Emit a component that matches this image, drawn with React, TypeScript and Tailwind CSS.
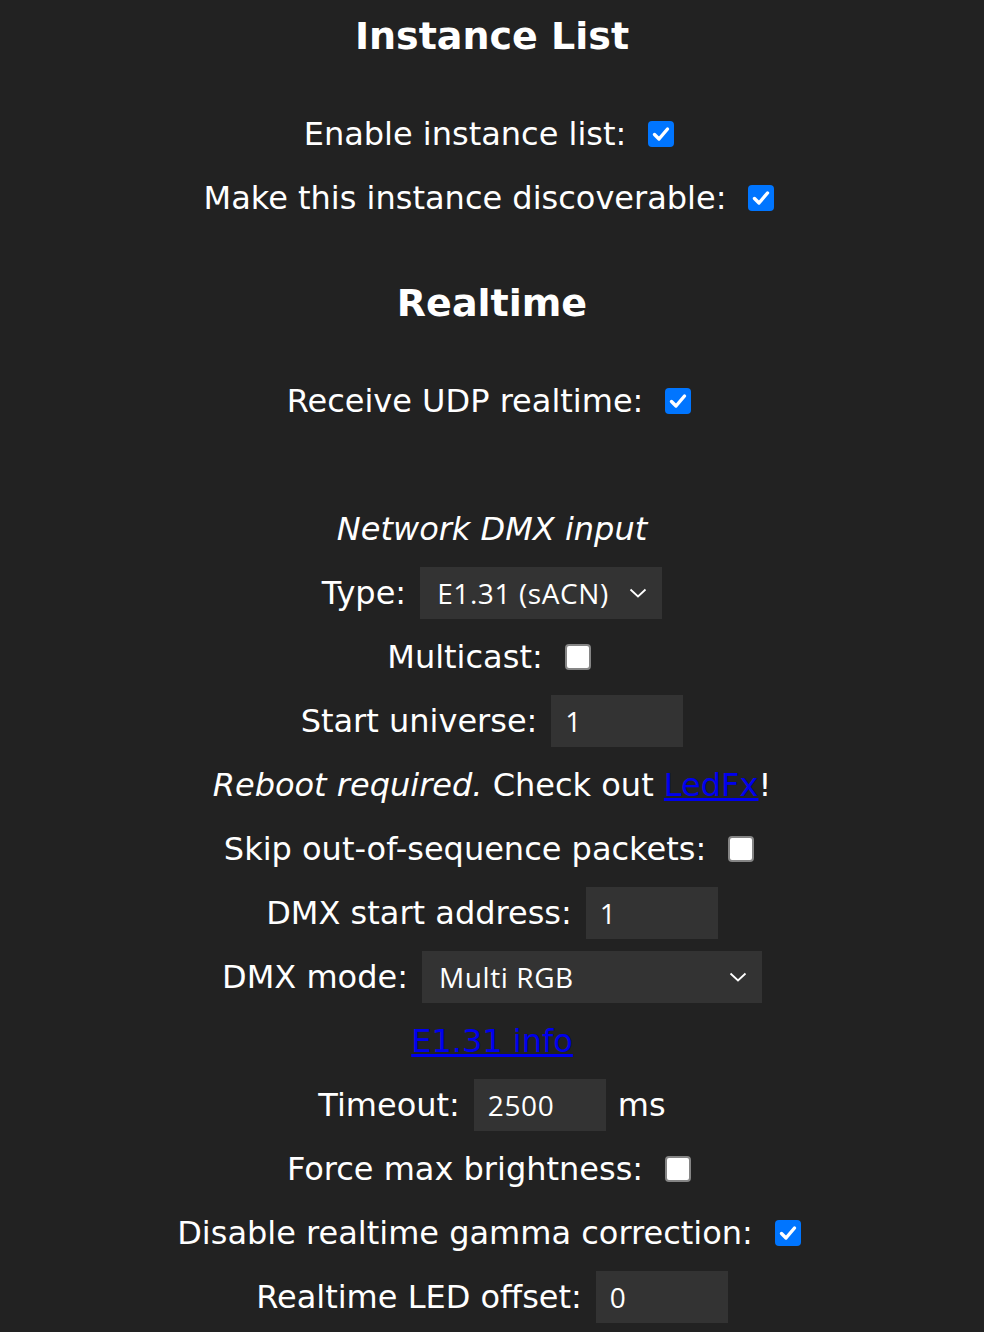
import React from "react";

const body = "font-['DejaVu_Sans',Verdana,sans-serif]";
const field = "font-['Open_Sans','Noto_Sans',sans-serif] text-[28px] tracking-[0.6px]";

function Check({ on }: { on?: boolean }) {
  return (
    <span className="ml-[22px] mr-[6px] inline-flex">
      {on ? (
        <span className="flex h-[26px] w-[26px] items-center justify-center rounded-[4px] bg-[#0075ff]">
          <svg width="26" height="26" viewBox="0 0 26 26">
            <path d="M6.5 13.5 L11 18 L19.5 8" fill="none" stroke="#fff" strokeWidth="3.4" strokeLinecap="round" strokeLinejoin="round" />
          </svg>
        </span>
      ) : (
        <span className="block h-[26px] w-[26px] rounded-[4px] border-2 border-[#858585] bg-white" />
      )}
    </span>
  );
}

function Chevron() {
  return (
    <svg width="18" height="10" viewBox="0 0 18 10">
      <path d="M1.5 1.5 L9 8.5 L16.5 1.5" fill="none" stroke="#fff" strokeWidth="1.8" />
    </svg>
  );
}

function Select({ value, w }: { value: string; w: string }) {
  return (
    <div className={`ml-[14px] flex h-[52px] items-center justify-between bg-[#333] pl-[17px] pr-[15px] ${w} ${field}`}>
      <span>{value}</span>
      <Chevron />
    </div>
  );
}

function NumInput({ value }: { value: string }) {
  return (
    <div className={`ml-[14px] flex h-[52px] w-[132px] items-center bg-[#333] pl-[14px] ${field}`}>
      {value}
    </div>
  );
}

function Row({ children, className = "" }: { children: React.ReactNode; className?: string }) {
  return <div className={`flex h-[64px] items-center justify-center ${className}`}>{children}</div>;
}

export default function App() {
  return (
    <div className={`min-h-[1332px] bg-[#222] text-white text-[32px] ${body}`}>
      <h3 className="h-[68px] pt-[2px] text-center text-[38px] font-bold leading-[68px]">Instance List</h3>

      <div className="mt-[34px]">
        <Row>Enable instance list:<Check on /></Row>
        <Row>Make this instance discoverable:<Check on /></Row>
      </div>

      <h3 className="mt-[37px] h-[68px] pt-[2px] text-center text-[38px] font-bold leading-[68px]">Realtime</h3>

      <Row className="mt-[34px]">Receive UDP realtime:<Check on /></Row>

      <div className="mt-[64px]">
        <Row><i>Network DMX input</i></Row>
        <Row>Type:<Select value="E1.31 (sACN)" w="w-[242px]" /></Row>
        <Row>Multicast:<Check /></Row>
        <Row>Start universe:<NumInput value="1" /></Row>
        <Row>
          <span>
            <i>Reboot required.</i> Check out{" "}
            <a href="#" className="text-[#0000ee] underline">LedFx</a>!
          </span>
        </Row>
        <Row>Skip out-of-sequence packets:<Check /></Row>
        <Row>DMX start address:<NumInput value="1" /></Row>
        <Row>DMX mode:<Select value="Multi RGB" w="w-[340px]" /></Row>
        <Row>
          <a href="#" className="text-[#0000ee] underline">E1.31 info</a>
        </Row>
        <Row>
          Timeout:<NumInput value="2500" />
          <span className="ml-[12px]">ms</span>
        </Row>
        <Row>Force max brightness:<Check /></Row>
        <Row>Disable realtime gamma correction:<Check on /></Row>
        <Row>Realtime LED offset:<NumInput value="0" /></Row>
      </div>
    </div>
  );
}
